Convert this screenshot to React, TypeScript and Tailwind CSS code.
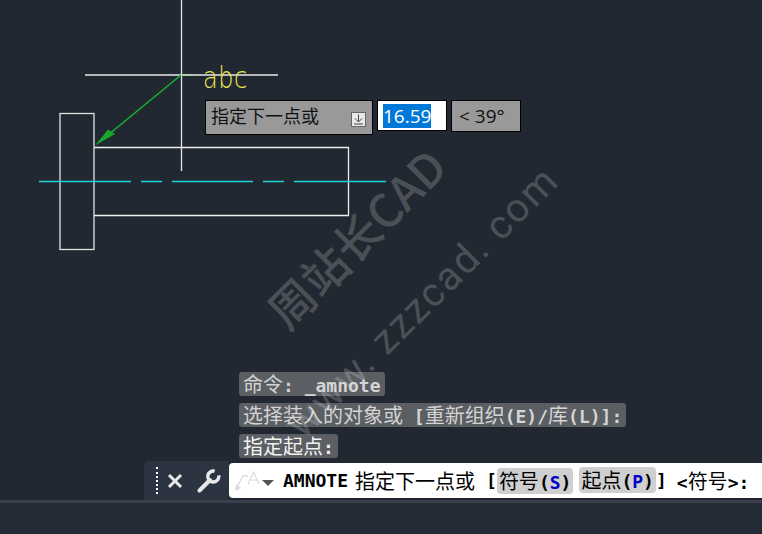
const mono = "font-['DejaVu_Sans_Mono','Noto_Sans_CJK_SC',monospace]";

const Cjk = ({ children }: { children: React.ReactNode }) => (
    <span className="font-['Noto_Sans_CJK_SC',sans-serif] text-[20px] font-normal">{children}</span>
);

const Drawing = () => (
    <svg className="absolute left-0 top-0" width={762} height={534} viewBox="0 0 762 534" fill="none">
        {/* part outline */}
        <rect x="60" y="113.5" width="34" height="136" stroke="#e2e2e2" strokeWidth="1.3" />
        <path d="M94 147.5H348.5V215.5H94" stroke="#eeeeee" strokeWidth="1.3" />
        {/* crosshair */}
        <path d="M181.5 0V171M85 75H278" stroke="#e6e6e6" strokeWidth="1.3" />
        <path d="M181 75H193" stroke="#a8e0a8" strokeWidth="1.3" />
        {/* center line */}
        <path d="M39 181.5H131M141 181.5H162M172 181.5H253M263 181.5H284M294 181.5H386" stroke="#1fd4d4" strokeWidth="1.4" />
        {/* leader arrow */}
        <path d="M181 75L108 135" stroke="#18b030" strokeWidth="1.6" />
        <path d="M95 145.5L108 129.5L115 134Z" fill="#18a82c" />
    </svg>
);

const Tooltip = () => (
    <div className="absolute left-[205px] top-[100px] flex items-start gap-[4px] text-[#111]">
        <div className="flex h-[35px] w-[168px] items-center justify-between border border-black bg-[#999999] pl-[5px] pr-[6px]">
            <span className="mb-[6px] font-['Noto_Sans_CJK_SC',sans-serif] text-[18px] leading-none">指定下一点或</span>
            <span className="mt-[4px] flex h-[15px] w-[15px] items-center justify-center border border-[#666] bg-[#e8e8e8]">
                <svg width="11" height="11" viewBox="0 0 11 11" fill="none" stroke="#444" strokeWidth="1">
                    <path d="M5.5 0.5V7.5M2 4.5L5.5 8L9 4.5M1 10H10" />
                </svg>
            </span>
        </div>
        <div className="flex h-[31px] w-[70px] items-center border border-black bg-white pl-[5px]">
            <span className="bg-[#0078d7] font-['Open_Sans',sans-serif] text-[19px] leading-[24px] text-white">16.59</span>
        </div>
        <div className="flex h-[32px] w-[70px] items-center border border-black bg-[#999999] pl-[7px] font-['Open_Sans',sans-serif] text-[19px]">
            &lt; 39°
        </div>
    </div>
);

const Watermark = () => (
    <div className="pointer-events-none absolute inset-0 text-white/20">
        <div className="absolute left-[355px] top-[237px] -translate-x-1/2 -translate-y-1/2 -rotate-45 whitespace-nowrap font-['Noto_Sans_CJK_SC',sans-serif] text-[46px] font-medium leading-none">
            周站长CAD
        </div>
        <div className="absolute left-[423px] top-[302px] -translate-x-1/2 -translate-y-1/2 -rotate-45 whitespace-nowrap font-['Roboto',sans-serif] text-[40px] leading-none tracking-[2px]">
            www. zzzcad. com
        </div>
    </div>
);

const History = ({ children, bright }: { children: React.ReactNode; bright?: boolean }) => (
    <div className={`h-[24px] rounded-[3px] bg-[#5b5e63] px-[4px] text-[18px] font-bold leading-[23px] whitespace-nowrap ${bright ? 'text-[#f2f2f2]' : 'text-[#d4d4d4]'} ${mono}`}>
        {children}
    </div>
);

const Option = ({ label, letter }: { label: string; letter: string }) => (
    <span className="inline-block h-[26px] rounded-[4px] bg-[#cfcfcf] px-[2px] font-bold leading-[26px]">
        <Cjk>{label}</Cjk>(<span className="text-[#0000c8]">{letter}</span>)
    </span>
);

const CommandBar = () => (
    <div className="ml-[144px] flex h-[39px] items-stretch">
        <div className="flex w-[85px] items-center rounded-tl-[5px] bg-[#2c3441]">
            <div className="ml-[12px] h-[27px] w-0 border-l-2 border-dotted border-white" />
            <svg className="ml-[9px]" width="16" height="16" viewBox="0 0 16 16" stroke="#e8e8e8" strokeWidth="3" fill="none">
                <path d="M2 2L14 14M14 2L2 14" />
            </svg>
            <svg className="ml-[14px]" width="24" height="24" viewBox="0 0 24 24" fill="none" stroke="#e8e8e8">
                <path d="M2.5 21.5L13 11" strokeWidth="4" strokeLinecap="round" />
                <path d="M21.5 5.5A5.5 5.5 0 1 1 17 2" strokeWidth="3.4" transform="rotate(8 16 7)" />
            </svg>
        </div>
        <div className={`my-[2px] flex flex-1 items-center rounded-l-[4px] bg-white text-[18px] text-black whitespace-nowrap ${mono}`}>
            <svg className="ml-[4px]" width="46" height="26" viewBox="0 0 46 26" fill="none">
                <path d="M3 21L10 8H15" stroke="#dcdcdc" strokeWidth="1.3" />
                <path d="M2 23L3 16L8 20Z" fill="#dcdcdc" />
                <path d="M15 16L20.5 4L26 16M17 12H24" stroke="#dcdcdc" strokeWidth="1.2" />
                <path d="M29 12H41L35 18Z" fill="#555" />
            </svg>
            <span className="ml-[4px] font-bold">AMNOTE</span>
            <span className="ml-[7px]"><Cjk>指定下一点或</Cjk></span>
            <span className="ml-[11px] font-bold">[</span>
            <Option label="符号" letter="S" />
            <span className="ml-[6px]"><Option label="起点" letter="P" /></span>
            <span className="font-bold">]</span>
            <span className="ml-[10px] font-bold">&lt;<Cjk>符号</Cjk>&gt;:</span>
        </div>
    </div>
);

export default function App() {
    return (
        <div className="relative flex h-[534px] w-[762px] flex-col justify-end overflow-hidden bg-[#222831]">
            <Drawing />
            <div className="absolute left-[203px] top-[63px] origin-top scale-y-[1.25] font-['DejaVu_Sans',sans-serif] text-[24px] font-extralight leading-[24px] tracking-[0.5px] text-[#e8e850]">
                abc
            </div>
            <Tooltip />
            <div className="relative ml-[239px] mb-[3px] flex flex-col items-start gap-[7px]">
                <History><Cjk>命令</Cjk>: _amnote</History>
                <History><Cjk>选择装入的对象或</Cjk> [<Cjk>重新组织</Cjk>(E)/<Cjk>库</Cjk>(L)]:</History>
                <History bright><Cjk>指定起点</Cjk>:</History>
            </div>
            <div className="relative">
                <CommandBar />
            </div>
            <div className="relative h-[34px] border-t-[3px] border-[#3a404b] bg-[#252b35]" />
            <Watermark />
        </div>
    );
}
